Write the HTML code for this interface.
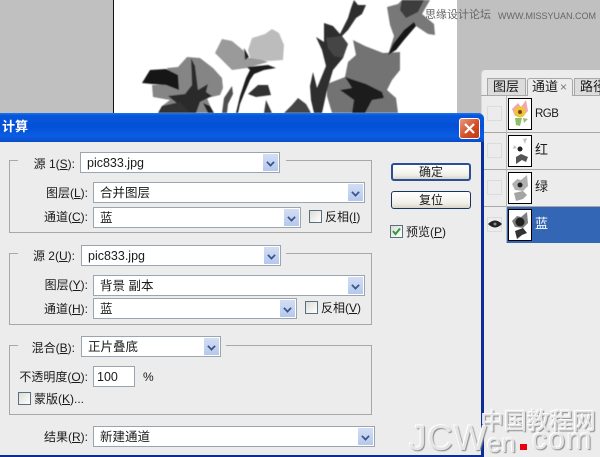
<!DOCTYPE html>
<html><head><meta charset="utf-8"><style>
html,body{margin:0;padding:0}
#p{position:relative;width:600px;height:457px;overflow:hidden;background:#c0c0c0;font:12px/14px "Liberation Sans","WenQuanYi Zen Hei","Noto Sans CJK SC",sans-serif;color:#1a1a1a}
#p div,#p svg{position:absolute}
#p span{position:absolute;white-space:nowrap}
u{text-decoration:underline}
.g{border:1px solid #a8a8a8;box-sizing:border-box;background:#ececec}
.gap{background:#ececec;height:3px}
.s{box-sizing:border-box;border:1px solid #9aa5b0;background:#fff;height:21px}
.s b{position:absolute;left:6px;top:3px;font-weight:normal;white-space:nowrap;font-size:12.5px}
.s i{position:absolute;right:1px;top:1px;bottom:1px;width:15px;background:linear-gradient(#d3def5,#b5c8ec);display:block}
.s i:after{content:"";position:absolute;left:4px;top:5px;width:5px;height:5px;border:solid #3a5488;border-width:0 2px 2px 0;transform:rotate(45deg) scale(.85)}
.c{box-sizing:border-box;width:13px;height:13px;border:1px solid #5a6f80;background:linear-gradient(135deg,#dcdcd6,#fff)}
.l{text-align:right}
.btn{left:391px;width:80px;height:18px;box-sizing:border-box;border:1px solid #17355f;border-radius:3px;background:linear-gradient(#fff,#f0f0ea 70%,#d8d4c8);text-align:center;line-height:16px}
.r{left:482px;width:118px;height:37px;border-bottom:1px solid #a8a8a8;box-sizing:border-box}
.eye{left:487px;width:15px;height:15px;box-sizing:border-box;border:1px solid #dcdcdc;background:#ececec}
.th{left:508px;width:24px;height:32px;box-sizing:border-box;border:1px solid #000;background:#fff}
.wm{color:#e4e4e4;text-shadow:-1px -1px 0 #fff,1px 1px 1px #8a8a8a}
</style></head><body><div id="p">

<div style="left:113px;top:0;width:344px;height:114px;background:#fff;border-left:1px solid #111;box-sizing:border-box"></div>
<svg style="left:0;top:0" width="600" height="114" viewBox="0 0 600 114">
<defs><filter id="f" x="-5%" y="-5%" width="110%" height="110%"><feGaussianBlur stdDeviation="0.5"/></filter></defs>
<g filter="url(#f)">
<!-- flower A -->
<path d="M167 68L178 67L187 57L200 58L213 68L222 78L223 88L220 95L207 98L213 113H158L162 106L170 100L153 97L152 85L170 84Z" fill="#858585"/>
<path d="M142 83L150 70L166 69L178 75L179 90L166 85L152 84Z" fill="#161616"/>
<path d="M191 58L195 66L198 90L208 84L206 92L212 96L200 102L196 113H186L178 104L168 96L185 94L192 85Z" fill="#2c2c2c"/>
<path d="M158 113L162 106L180 102L190 113Z" fill="#333"/>
<path d="M203 103L210 106L214 113H208Z" fill="#222"/>
<!-- flower B -->
<path d="M215 53L222 39L232 41L244 51L245 58L258 58L268 62L247 68L232 70L224 62Z" fill="#9a9a9a"/>
<path d="M248 50L252 38L265 34L272 29L279 33L284 45L283 60L268 61L250 58Z" fill="#bcbcbc"/>
<path d="M244 48L249 57L245 60Z" fill="#222"/>
<path d="M247 67L268 65L276 68L264 70L254 74L250 80L244 94L240 104L238 113H236L240 96L246 78L250 70Z" fill="#1f1f1f"/>
<path d="M248 94L258 85L268 85L271 95L256 97Z" fill="#303030"/>
<path d="M222 113L224 98L232 86L233 94L228 104L227 113Z" fill="#505050"/>
<path d="M264 113L266 100L272 113Z" fill="#3a3a3a"/>
<path d="M284 113L292 105L298 98L306 104L311 113Z" fill="#454545"/>
<!-- flower C -->
<path d="M353 40L365 46L383 53L400 52L400 70L392 80L387 90L396 98L398 113H332L327 96L327 84L345 77L348 62L356 55Z" fill="#737373"/>
<path d="M345 77L354 80L366 84L382 92L384 98L372 100L365 113H352L354 100L340 90L352 88Z" fill="#1c1c1c"/>
<!-- upper flower -->
<path d="M387 7L398 4L402 0H430L422 14L434 24L435 35L428 34L416 26L405 36L396 48L388 55L394 36L390 25Z" fill="#787878"/>
<path d="M402 0H424L418 12L406 18L400 10Z" fill="#3c3c3c"/>
<path d="M388 55L393 44L404 30L414 22L416 26L404 40L396 50Z" fill="#171717"/>
<!-- bud & stem -->
<path d="M354 0L358 5L366 5L362 14L356 18L348 30L342 36L347 44L343 58L333 70L327 90L322 113H314L311 100L310 86L313 72L317 88L326 66L322 50L316 37L324 42L324 23L333 26L340 34L348 18L351 8Z" fill="#2f2f2f"/>
<path d="M326 38L342 36L348 44L343 58L334 56L328 48Z" fill="#454545"/>
</g>
</svg>

<!-- top watermark -->
<span style="left:425px;top:8px;font-size:11px;color:#666">思缘设计论坛</span>
<span style="left:498px;top:9px;font-size:9px;color:#666">WWW.MISSYUAN.COM</span>

<!-- panel -->
<div style="left:481px;top:70px;width:119px;height:387px;background:#ececec;border-radius:4px 0 0 0;border-left:1px solid #d8d8d8;box-sizing:border-box"></div>
<div style="left:481px;top:95px;width:119px;height:1px;background:#a8a8a8"></div>
<div style="left:487px;top:78px;width:39px;height:18px;background:#dcdcdc;border:1px solid #a8a8a8;box-sizing:border-box"></div>
<div style="left:527px;top:78px;width:46px;height:18px;background:#ececec;border:1px solid #a8a8a8;border-bottom:0;box-sizing:border-box;border-radius:3px 3px 0 0"></div>
<div style="left:574px;top:78px;width:26px;height:18px;background:#dcdcdc;border:1px solid #a8a8a8;box-sizing:border-box"></div>
<span style="left:493px;top:80px;font-size:13px">图层</span>
<span style="left:532px;top:80px;font-size:13px">通道</span>
<span style="left:560px;top:80px;color:#777">×</span>
<span style="left:580px;top:80px;font-size:13px">路径</span>

<div class="r" style="top:96px"></div>
<div class="r" style="top:133px"></div>
<div class="r" style="top:170px"></div>
<div class="r" style="top:207px;left:506px;width:94px;height:36px;background:#3366b4;border:0"></div>
<div style="left:506px;top:96px;width:1px;height:147px;background:#b8b8b8"></div>
<div class="eye" style="top:106px"></div>
<div class="eye" style="top:143px"></div>
<div class="eye" style="top:180px"></div>
<div class="eye" style="top:217px"></div>
<svg style="left:488px;top:220px" width="14" height="9" viewBox="0 0 14 9"><path d="M0 4Q7-3 14 4Q7 11 0 4Z" fill="#222"/><circle cx="7" cy="4" r="1.500" fill="#888"/></svg>

<div class="th" style="top:98px"></div>
<svg style="left:509px;top:99px" width="22" height="30" viewBox="0 0 22 30"><path d="M3 10L9 4L12 8L17 1L19 12L14 17L6 17Z" fill="#f0a8ac"/><circle cx="11" cy="13" r="5.500" fill="#f0c53a"/><circle cx="11" cy="13" r="2" fill="#6e4a12"/><path d="M6 19L13 19L11 27L7 26Z" fill="#8cc06a"/><path d="M14 19L19 20L15 24Z" fill="#a0b878"/></svg>
<div class="th" style="top:135px"></div>
<svg style="left:509px;top:136px" width="22" height="30" viewBox="0 0 22 30"><circle cx="11" cy="13" r="2.500" fill="#222"/><path d="M7 21L12 18L19 21L17 26L13 24L7 28Z" fill="#555"/><path d="M14 3L18 2L16 8ZM5 9L8 12L4 13Z" fill="#c4c4c4"/></svg>
<div class="th" style="top:172px"></div>
<svg style="left:509px;top:173px" width="22" height="30" viewBox="0 0 22 30"><path d="M3 11L8 6L12 7L18 2L19 13L14 18L6 17Z" fill="#b0b0b0"/><circle cx="11" cy="12" r="2.500" fill="#222"/><path d="M5 20L14 18L18 22L14 26L7 28Z" fill="#a4a4a4"/></svg>
<div class="th" style="top:209px"></div>
<svg style="left:509px;top:210px" width="22" height="30" viewBox="0 0 22 30"><path d="M3 11L8 6L12 7L18 2L19 13L14 18L6 17Z" fill="#808080"/><circle cx="11" cy="12" r="4.500" fill="#222"/><path d="M6 21L14 18L18 23L13 25L8 29Z" fill="#333"/></svg>
<span style="left:535px;top:107px;font-size:11.500px;letter-spacing:-.5px">RGB</span>
<span style="left:535px;top:143px;font-size:13px">红</span>
<span style="left:535px;top:180px;font-size:13px">绿</span>
<span style="left:535px;top:217px;font-size:13px;color:#fff">蓝</span>

<!-- dialog -->
<div style="left:0;top:113px;width:484px;height:344px;background:#ececec;border-radius:0 6px 0 0;border-right:3px solid #0a2d96;box-sizing:border-box"></div>
<div style="left:0;top:113px;width:484px;height:29px;background:linear-gradient(#1f78ea 0,#0757dc 8%,#0350d6 45%,#0a5de4 80%,#0a4cc4 100%);border-radius:0 6px 0 0"></div>
<div style="left:0;top:455px;width:484px;height:2px;background:#0a2d96"></div>
<span style="left:2px;top:120px;color:#fff;font-weight:bold;font-size:13px">计算</span>
<div style="left:459px;top:118px;width:21px;height:21px;box-sizing:border-box;border:1px solid #fff;border-radius:3px;background:linear-gradient(135deg,#e89a80,#d14a22 60%,#c03a18)"></div>
<svg style="left:459px;top:118px" width="21" height="21"><path d="M6 6L15 15M15 6L6 15" stroke="#fff" stroke-width="2.200"/></svg>

<!-- group 1 -->
<div class="g" style="left:9px;top:160px;width:363px;height:73px"></div>
<div class="gap" style="left:18px;top:159px;width:268px"></div>
<span class="l" style="right:525px;top:157px">源 1(<u>S</u>):</span>
<div class="s" style="left:80px;top:152px;width:200px"><b>pic833.jpg</b><i></i></div>
<span class="l" style="right:512px;top:186px">图层(<u>L</u>):</span>
<div class="s" style="left:93px;top:182px;width:272px"><b>合并图层</b><i></i></div>
<span class="l" style="right:512px;top:210px">通道(<u>C</u>):</span>
<div class="s" style="left:93px;top:207px;width:208px"><b>蓝</b><i></i></div>
<div class="c" style="left:309px;top:210px"></div>
<span style="left:325px;top:210px">反相(<u>I</u>)</span>

<!-- group 2 -->
<div class="g" style="left:9px;top:253px;width:363px;height:72px"></div>
<div class="gap" style="left:18px;top:252px;width:268px"></div>
<span class="l" style="right:525px;top:249px">源 2(<u>U</u>):</span>
<div class="s" style="left:81px;top:245px;width:200px"><b>pic833.jpg</b><i></i></div>
<span class="l" style="right:512px;top:278px">图层(<u>Y</u>):</span>
<div class="s" style="left:93px;top:275px;width:272px"><b>背景 副本</b><i></i></div>
<span class="l" style="right:512px;top:302px">通道(<u>H</u>):</span>
<div class="s" style="left:93px;top:298px;width:204px"><b>蓝</b><i></i></div>
<div class="c" style="left:305px;top:301px"></div>
<span style="left:321px;top:301px">反相(<u>V</u>)</span>

<!-- group 3 -->
<div class="g" style="left:9px;top:345px;width:363px;height:70px"></div>
<div class="gap" style="left:18px;top:344px;width:208px"></div>
<span class="l" style="right:525px;top:341px">混合(<u>B</u>):</span>
<div class="s" style="left:81px;top:336px;width:140px"><b>正片叠底</b><i></i></div>
<span class="l" style="right:512px;top:370px">不透明度(<u>O</u>):</span>
<div class="s" style="left:93px;top:366px;width:42px"><b style="left:3px;top:3px">100</b></div>
<span style="left:143px;top:370px">%</span>
<div class="c" style="left:18px;top:392px"></div>
<span style="left:34px;top:392px">蒙版(<u>K</u>)...</span>

<span class="l" style="right:512px;top:430px">结果(<u>R</u>):</span>
<div class="s" style="left:93px;top:426px;width:282px"><b>新建通道</b><i></i></div>

<!-- buttons -->
<div class="btn" style="top:163px;border-width:2px;line-height:14px;border-color:#2a4f96">确定</div>
<div class="btn" style="top:191px">复位</div>
<div class="c" style="left:390px;top:225px"></div>
<svg style="left:391px;top:226px" width="11" height="11"><path d="M2 5L4.500 8L9 2.500" stroke="#2f9a45" stroke-width="2" fill="none"/></svg>
<span style="left:406px;top:225px">预览(<u>P</u>)</span>

<!-- watermark -->
<span class="wm" style="left:481px;top:409px;font-size:23px;line-height:24px">中国教程网</span>
<span class="wm" style="left:409px;top:420px;font-size:35px;line-height:38px;letter-spacing:1px">JCW</span>
<span class="wm" style="left:487px;top:428px;font-size:26px;line-height:30px">en</span>
<span class="wm" style="left:532px;top:423px;font-size:30px;line-height:34px;letter-spacing:1.500px">com</span>
<div style="left:520px;top:444px;width:7px;height:6px;background:#e8000c"></div>
</div></body></html>
